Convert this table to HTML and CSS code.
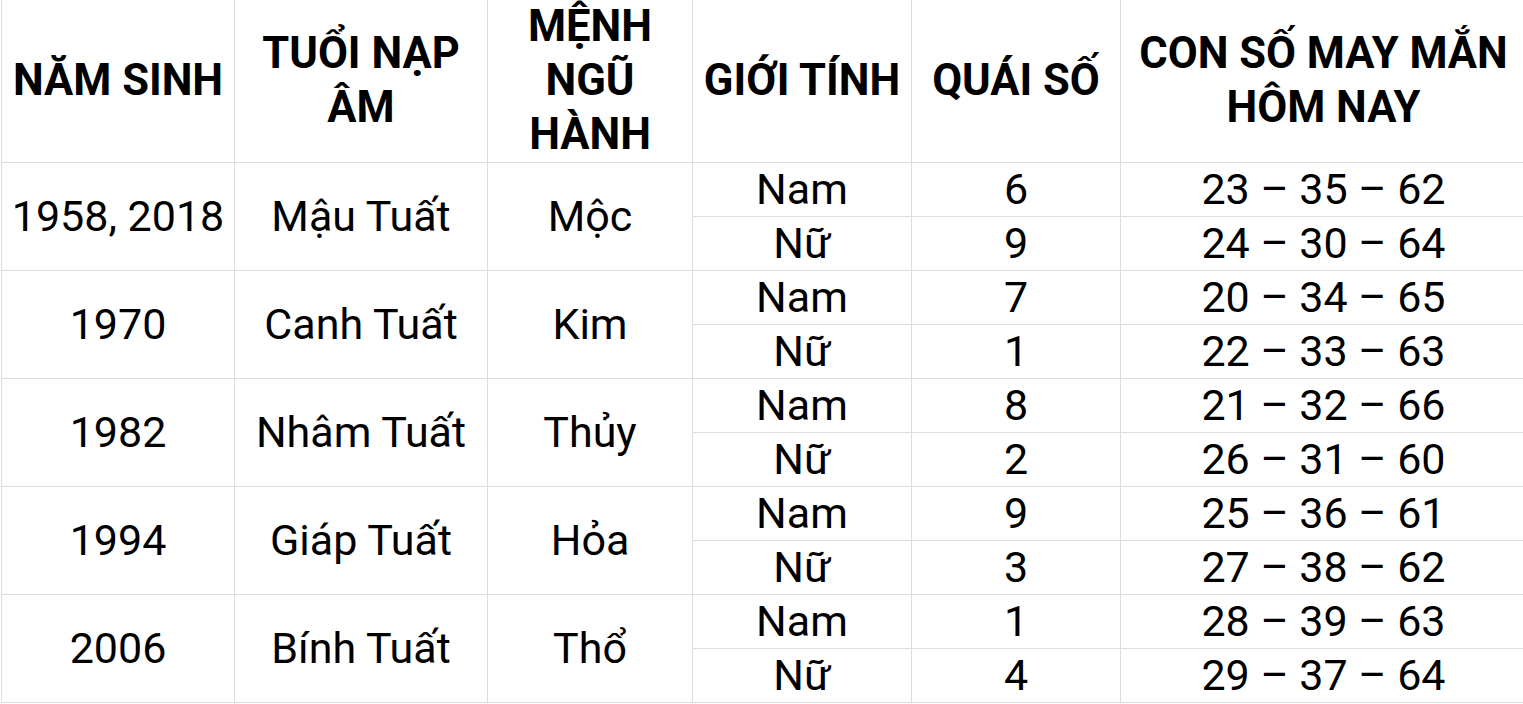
FILE: index.html
```html
<!DOCTYPE html>
<html lang="vi">
<head>
<meta charset="utf-8">
<title>Con số may mắn</title>
<link rel="stylesheet" href="styles.css">
</head>
<body>
<table class="luck">
  <colgroup>
    <col class="c1"><col class="c2"><col class="c3"><col class="c4"><col class="c5"><col class="c6">
  </colgroup>
  <thead>
    <tr>
      <th>NĂM SINH</th>
      <th>TUỔI NẠP<br>ÂM</th>
      <th>MỆNH<br>NGŨ<br>HÀNH</th>
      <th>GIỚI TÍNH</th>
      <th>QUÁI SỐ</th>
      <th>CON SỐ MAY MẮN<br>HÔM NAY</th>
    </tr>
  </thead>
  <tbody>
    <tr><td rowspan="2" class="big">1958, 2018</td><td rowspan="2" class="big">Mậu Tuất</td><td rowspan="2" class="big">Mộc</td><td>Nam</td><td>6</td><td>23 – 35 – 62</td></tr>
    <tr><td>Nữ</td><td>9</td><td>24 – 30 – 64</td></tr>
    <tr><td rowspan="2" class="big">1970</td><td rowspan="2" class="big">Canh Tuất</td><td rowspan="2" class="big">Kim</td><td>Nam</td><td>7</td><td>20 – 34 – 65</td></tr>
    <tr><td>Nữ</td><td>1</td><td>22 – 33 – 63</td></tr>
    <tr><td rowspan="2" class="big">1982</td><td rowspan="2" class="big">Nhâm Tuất</td><td rowspan="2" class="big">Thủy</td><td>Nam</td><td>8</td><td>21 – 32 – 66</td></tr>
    <tr><td>Nữ</td><td>2</td><td>26 – 31 – 60</td></tr>
    <tr><td rowspan="2" class="big">1994</td><td rowspan="2" class="big">Giáp Tuất</td><td rowspan="2" class="big">Hỏa</td><td>Nam</td><td>9</td><td>25 – 36 – 61</td></tr>
    <tr><td>Nữ</td><td>3</td><td>27 – 38 – 62</td></tr>
    <tr><td rowspan="2" class="big">2006</td><td rowspan="2" class="big">Bính Tuất</td><td rowspan="2" class="big">Thổ</td><td>Nam</td><td>1</td><td>28 – 39 – 63</td></tr>
    <tr><td>Nữ</td><td>4</td><td>29 – 37 – 64</td></tr>
  </tbody>
</table>
</body>
</html>
```

FILE: styles.css
```css
html, body {
  margin: 0;
  padding: 0;
  background: #ffffff;
  overflow: hidden;
}

.luck {
  margin-left: 1px;
  border-collapse: collapse;
  table-layout: fixed;
  width: 1525px;
  font-family: Roboto, "Noto Sans", sans-serif;
  color: #000000;
}

.c1 { width: 233px; }
.c2 { width: 253px; }
.c3 { width: 205px; }
.c4 { width: 219px; }
.c5 { width: 209px; }
.c6 { width: 406px; }

.luck th,
.luck td {
  border: 1px solid #dddddd;
  padding: 0;
  text-align: center;
  vertical-align: middle;
}

.luck th {
  border-top: none;
  line-height: 54px;
  font-size: 43.5px;
  font-weight: 700;
}

.luck td {
  line-height: 53px;
  font-size: 43px;
  font-weight: 400;
}
```
